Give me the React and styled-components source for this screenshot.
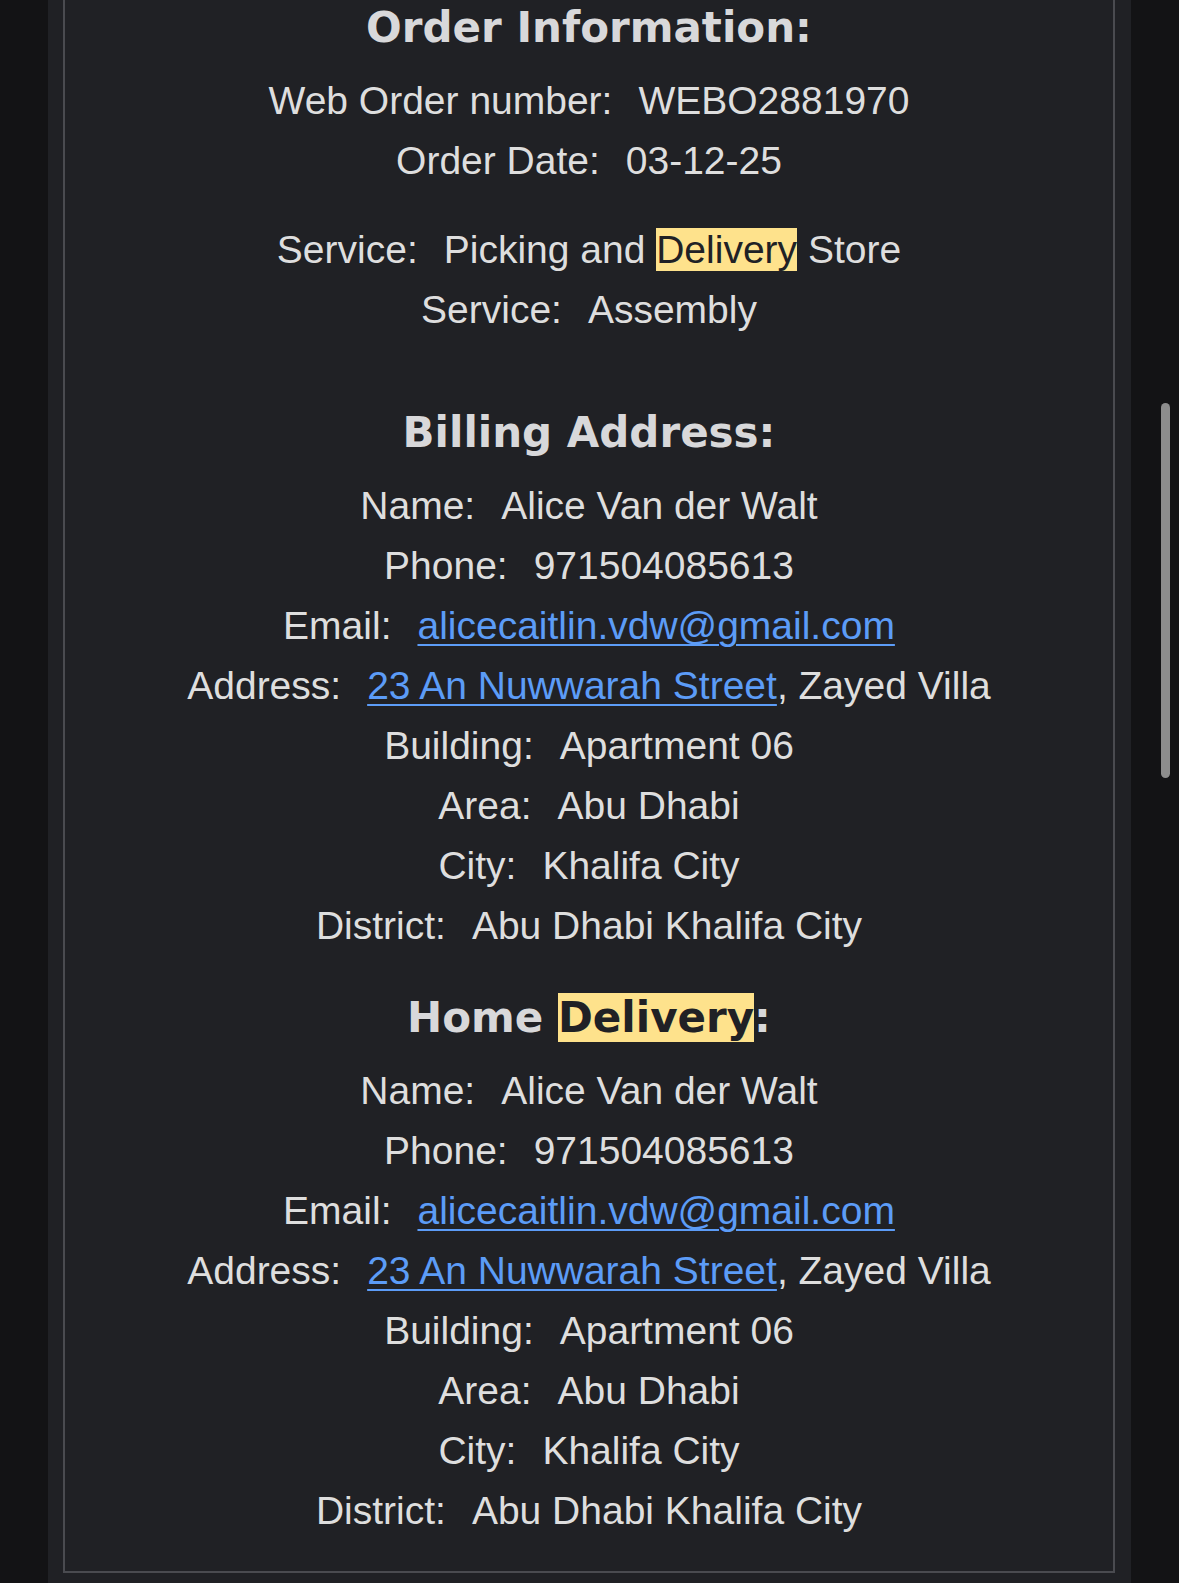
import React from "react";
import styled, { createGlobalStyle } from "styled-components";

const GlobalStyle = createGlobalStyle`
  html, body {
    margin: 0;
    padding: 0;
    background: #131315;
    overflow: hidden;
  }
  body {
    font-family: "Liberation Sans", Arial, sans-serif;
  }
`;

const Page = styled.div`
  display: flex;
  justify-content: center;
  min-height: 1583px;
`;

const Panel = styled.div`
  width: 1083px;
  background: #202125;
  padding-bottom: 10px;
`;

const Box = styled.div`
  margin: 0 16px 0 15px;
  border: 2px solid #4a4b50;
  border-top: none;
  padding-bottom: 30px;
  text-align: center;
`;

const Heading = styled.h2`
  margin: ${(p) => p.$top || 0}px 0 15px;
  font-family: "DejaVu Sans", Verdana, sans-serif;
  font-weight: bold;
  font-size: 42px;
  line-height: 56px;
  color: #d8d8da;
`;

const Group = styled.div`
  margin-top: ${(p) => p.$top || 0}px;
`;

const Line = styled.div`
  font-size: 39px;
  line-height: 60px;
  color: #dedede;
  white-space: nowrap;
`;

const Label = styled.span``;

const Value = styled.span`
  margin-left: 26px;
`;

const Link = styled.a`
  color: #5c9cf7;
  text-decoration: underline;
  text-decoration-thickness: 2px;
  text-underline-offset: 5px;
`;

const Mark = styled.span`
  background: #fee28c;
  color: #202125;
`;

const Scrollbar = styled.div`
  position: fixed;
  left: 1161px;
  top: 403px;
  width: 9px;
  height: 375px;
  border-radius: 5px;
  background: #8d8d8d;
`;

const Row = ({ label, children }) => (
  <Line>
    <Label>{label}</Label>
    <Value>{children}</Value>
  </Line>
);

const Contact = () => (
  <Group>
    <Row label="Name:">Alice Van der Walt</Row>
    <Row label="Phone:">971504085613</Row>
    <Row label="Email:">
      <Link href="#">alicecaitlin.vdw@gmail.com</Link>
    </Row>
    <Row label="Address:">
      <Link href="#">23 An Nuwwarah Street</Link>, Zayed Villa
    </Row>
    <Row label="Building:">Apartment 06</Row>
    <Row label="Area:">Abu Dhabi</Row>
    <Row label="City:">Khalifa City</Row>
    <Row label="District:">Abu Dhabi Khalifa City</Row>
  </Group>
);

const App = () => {
  return (
    <>
      <GlobalStyle />
      <Page>
        <Panel>
          <Box>
            <Heading>Order Information:</Heading>
            <Group>
              <Row label="Web Order number:">WEBO2881970</Row>
              <Row label="Order Date:">03-12-25</Row>
            </Group>
            <Group $top={29}>
              <Row label="Service:">
                Picking and <Mark>Delivery</Mark> Store
              </Row>
              <Row label="Service:">Assembly</Row>
            </Group>

            <Heading $top={65}>Billing Address:</Heading>
            <Contact />

            <Heading $top={34}>
              Home <Mark>Delivery</Mark>:
            </Heading>
            <Contact />
          </Box>
        </Panel>
      </Page>
      <Scrollbar />
    </>
  );
};

export default App;
